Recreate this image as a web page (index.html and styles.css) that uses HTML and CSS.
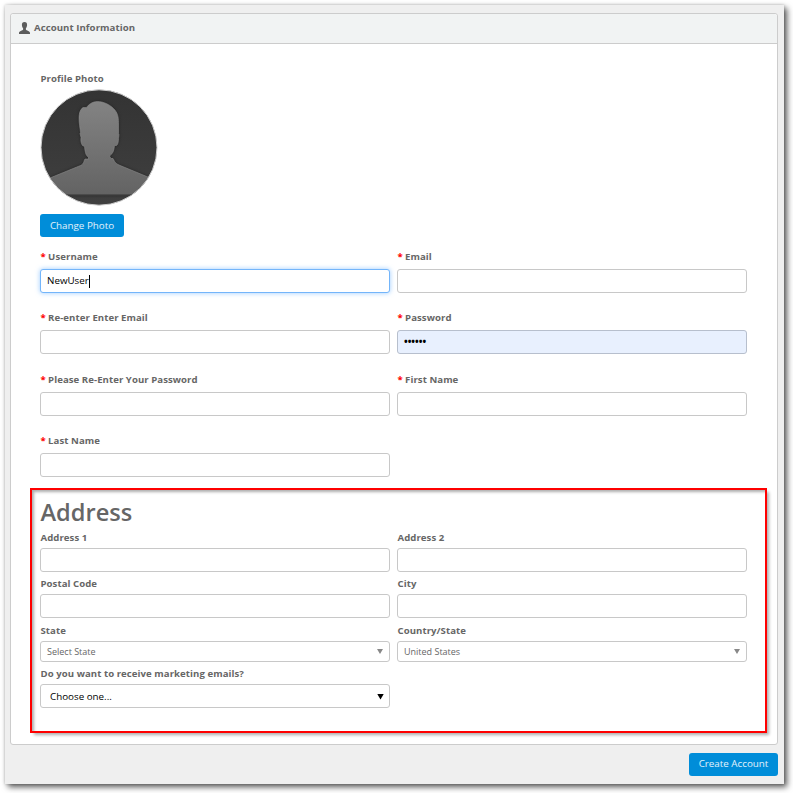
FILE: index.html
```html
<!DOCTYPE html>
<html lang="en">
<head>
<meta charset="utf-8">
<title>Account Information</title>
<link rel="stylesheet" href="styles.css">
</head>
<body>
<main class="page">
  <section class="panel">
    <header class="panel-header">
      <svg class="user-icon" width="11" height="12" viewBox="0 0 11 12"><path d="M5.500 0C3.700 0 2.800 1.200 2.900 3.100c.1 1.500.6 2.600 1.200 3.200v1.200C3.700 8.700 0 9 0 11v1h11v-1c0-2-3.700-2.300-4.100-3.500V6.300c.6-.6 1.100-1.700 1.200-3.200C8.200 1.200 7.300 0 5.500 0z"/></svg>
      <span>Account Information</span>
    </header>
    <div class="panel-body">
      <div class="label">Profile Photo</div>
      <svg class="avatar" width="118" height="117" viewBox="0 0 118 117">
        <defs>
          <linearGradient id="back" x1="0" y1="0" x2="0" y2="1"><stop offset="0" stop-color="#333"/><stop offset="1" stop-color="#404040"/></linearGradient>
          <linearGradient id="person" x1="0" y1="0" x2="0" y2="1"><stop offset="0" stop-color="#838383"/><stop offset="1" stop-color="#636363"/></linearGradient>
          <clipPath id="round"><ellipse cx="59" cy="58.500" rx="58" ry="57.700"/></clipPath>
        </defs>
        <g clip-path="url(#round)">
          <rect width="118" height="117" fill="url(#back)"/>
          <path class="silhouette" fill="url(#person)" stroke="#8c8c8c" stroke-width=".6" d="M43 18.500h3.500c2-3 6-6 11-6 6 0 12 3 16 7 4 4 5 8 5 14v11c1 1 0 3 0 5 0 3-.5 6-2 7h-2c-.5 5-1.500 8-4 9.500l-1 1 1.500 2.500h2c1.500 2 1 4 6 6.500l35 14.500v15.500H5V91l35.500-14.500c4-2 3-4.500 4.500-6.500h3.500v-2l-1-.5c-2-2-2.500-5-3-10l-2-1c-1.500-2-2-5-1.500-8l-1-4 .5-1c-.5-5-1.500-9-1.500-14 0-5 1-9 4-11z"/>
          <path d="M0 106h118" stroke="#282828"/>
        </g>
        <ellipse cx="59" cy="58.500" rx="58" ry="57.700" fill="none" stroke="#ccc"/>
      </svg>
      <button class="button change">Change Photo</button>

      <div class="fields">
        <div class="field"><label class="label"><i>*</i>Username</label><div class="control focused">NewUser<span class="caret"></span></div></div>
        <div class="field"><label class="label"><i>*</i>Email</label><div class="control"></div></div>
        <div class="field"><label class="label"><i>*</i>Re-enter Enter Email</label><div class="control"></div></div>
        <div class="field"><label class="label"><i>*</i>Password</label><div class="control filled"><span class="dots">••••••</span></div></div>
        <div class="field"><label class="label"><i>*</i>Please Re-Enter Your Password</label><div class="control"></div></div>
        <div class="field"><label class="label"><i>*</i>First Name</label><div class="control"></div></div>
        <div class="field"><label class="label"><i>*</i>Last Name</label><div class="control"></div></div>
      </div>

      <section class="address">
        <h2>Address</h2>
        <div class="address-grid">
          <div class="field"><label class="label">Address 1</label><div class="control"></div></div>
          <div class="field"><label class="label">Address 2</label><div class="control"></div></div>
          <div class="field"><label class="label">Postal Code</label><div class="control"></div></div>
          <div class="field"><label class="label">City</label><div class="control"></div></div>
          <div class="field"><label class="label">State</label><div class="control picker">Select State<span class="arrow"></span></div></div>
          <div class="field"><label class="label">Country/State</label><div class="control picker">United States<span class="arrow"></span></div></div>
          <div class="field"><label class="label">Do you want to receive marketing emails?</label><div class="control choice">Choose one...<span class="arrow"></span></div></div>
        </div>
      </section>
    </div>
  </section>
  <footer><button class="button create">Create Account</button></footer>
</main>
</body>
</html>
```
FILE: styles.css
```css
* { box-sizing: border-box; }
body {
  margin: 0;
  padding: 5px;
  height: 793px;
  overflow: hidden;
  background: #fff;
  color: #666;
  font: 9.8px/16px "Open Sans", sans-serif;
}
.page {
  width: 779px;
  height: 779px;
  padding: 8px 6px 0 5px;
  background: #efefef;
  box-shadow: 3px 3px 6px rgba(0, 0, 0, .65), 0 0 3px rgba(0, 0, 0, .2);
}
.panel {
  height: 732px;
  border: 1px solid #ccc;
  border-radius: 3px;
  background: #fff;
}
.panel-header {
  display: flex;
  align-items: center;
  gap: 4px;
  height: 30px;
  padding: 0 8px 2px;
  border-bottom: 1px solid #ccc;
  border-radius: 3px 3px 0 0;
  background: #f1f3f3;
  font-size: 9.65px;
  font-weight: 700;
  letter-spacing: .05px;
}
.user-icon { fill: #5c5c5c; }
.panel-body { padding: 26px 30px 0 29px; }
.label {
  display: block;
  height: 17px;
  padding-left: .5px;
  font-size: 9.6px;
  font-weight: 700;
  line-height: 18px;
  letter-spacing: .06px;
  white-space: nowrap;
}
.label i {
  margin-right: 2.3px;
  color: #f00;
  font-style: normal;
}
.avatar { display: block; margin-top: 2px; }
.silhouette { filter: drop-shadow(0 0 1.5px #222); }
.button {
  display: block;
  height: 23px;
  padding: 0;
  border: 0;
  border-radius: 3px;
  background: #008dd9;
  color: #e2f2fb;
  font: 9.8px/23px "Open Sans", sans-serif;
}
.change { width: 84px; margin-top: 8px; }
.fields {
  display: grid;
  grid-template-columns: 350px 350px;
  grid-template-rows: 61px 62px 61px 45px;
  column-gap: 7px;
  margin-top: 11px;
}
.control {
  display: flex;
  align-items: center;
  height: 24px;
  margin-top: 4px;
  padding: 0 6px;
  border: 1px solid #c8c8c8;
  border-radius: 3px;
  background: #fff;
  color: #000;
}
.focused {
  border-color: #73b5fa;
  box-shadow: 0 0 5px rgba(102, 175, 255, .65);
}
.caret { width: 1px; height: 13px; background: #000; }
.filled { border-color: #b7bfcd; background: #e8f0fe; }
.dots { font-weight: 700; }
.address {
  width: 737px;
  height: 245px;
  margin: 11px 0 0 -10px;
  padding: 9px 8px 0;
  border: 2px solid #f00;
  box-shadow: 3px 3px 3px -1px rgba(0, 0, 0, .32), inset 3px 3px 3px -1px rgba(0, 0, 0, .32);
}
h2 {
  height: 30px;
  margin: 0;
  padding-left: .5px;
  font-size: 23.6px;
  font-weight: 600;
  line-height: 27px;
}
.address-grid {
  display: grid;
  grid-template-columns: 350px 350px;
  grid-template-rows: 46px 47px 43px 42px;
  column-gap: 7px;
}
.address .control { margin-top: 2px; }
.address .picker { height: 21px; color: #666; font-size: 9px; }
.address .choice { padding: 1px 5px 0 9px; }
.arrow {
  width: 6px;
  height: 5px;
  margin-left: auto;
  background: #888;
  clip-path: polygon(0 0, 100% 0, 50% 100%);
}
.choice .arrow { width: 7px; height: 6px; background: #000; }
footer { display: flex; justify-content: flex-end; padding-top: 8px; }
.create { width: 89px; padding-bottom: 2px; line-height: 21px; }
```
